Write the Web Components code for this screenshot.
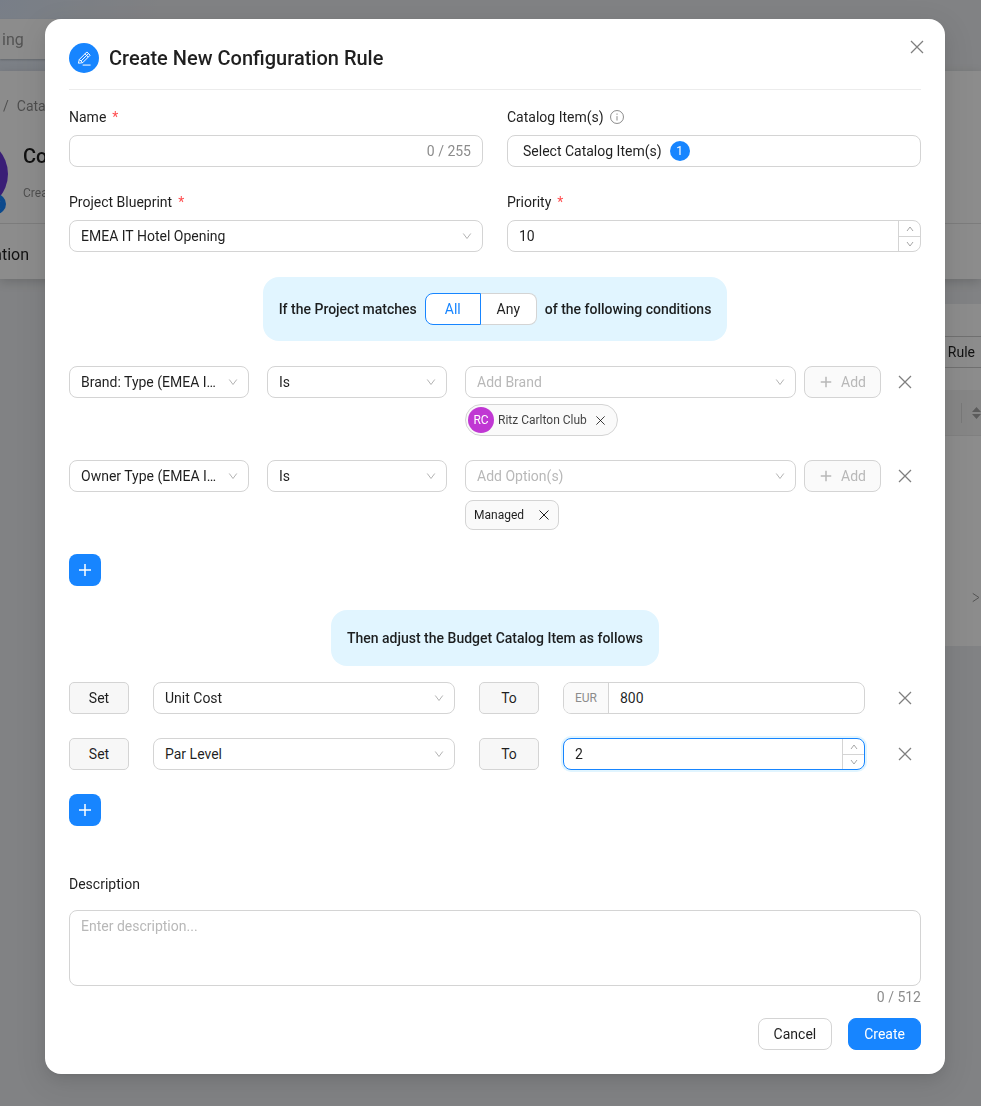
<!DOCTYPE html>
<html lang="en">
<head>
<meta charset="utf-8">
<meta name="viewport" content="width=device-width, initial-scale=1">
<title>Create New Configuration Rule</title>
<style>
	html {
		--primary: #1785ff;
		--primary-soft: #e1f5ff;
		--border: #d4d4d4;
		--text: rgba(0, 0, 0, .88);
		--muted: rgba(0, 0, 0, .45);
		--placeholder: #b8b8b8;
	}

	body {
		margin: 0;
		min-height: 100vh;
		background: #ebedf0;
		color: var(--text);
		font: 14px/22px Roboto, "Liberation Sans", sans-serif;
	}
</style>
</head>
<body>
	<page-backdrop></page-backdrop>

	<modal-dialog heading="Create New Configuration Rule">
		<form-grid>
			<text-field label="Name" required max="255"></text-field>
			<picker-field label="Catalog Item(s)" text="Select Catalog Item(s)" count="1"></picker-field>
			<select-field label="Project Blueprint" required value="EMEA IT Hotel Opening"></select-field>
			<number-field label="Priority" required value="10"></number-field>
		</form-grid>

		<banner-box class="conditions">
			<span>If the Project matches</span>
			<radio-switch name="match" options="All,Any"></radio-switch>
			<span>of the following conditions</span>
		</banner-box>

		<rule-list>
			<condition-row field="Brand: Type (EMEA I…" operator="Is" placeholder="Add Brand">
				<value-tag initials="RC">Ritz Carlton Club</value-tag>
			</condition-row>
			<condition-row field="Owner Type (EMEA I…" operator="Is" placeholder="Add Option(s)">
				<value-tag>Managed</value-tag>
			</condition-row>
			<add-button label="Add condition"></add-button>
		</rule-list>

		<banner-box class="adjustments">
			<span>Then adjust the Budget Catalog Item as follows</span>
		</banner-box>

		<rule-list>
			<adjust-row field="Unit Cost">
				<money-field label="Unit Cost value" currency="EUR" value="800"></money-field>
			</adjust-row>
			<adjust-row field="Par Level">
				<number-field title="Par Level value" active value="2"></number-field>
			</adjust-row>
			<add-button label="Add adjustment"></add-button>
		</rule-list>

		<area-field label="Description" placeholder="Enter description..." max="512"></area-field>
	</modal-dialog>

<script>
const icons = {
	close: '<path d="M2 2l12 12M14 2L2 14"/>',
	plus: '<path d="M8 2v12M2 8h12"/>',
	down: '<path d="M2 4l6 8 6-8"/>',
	up: '<path d="M2 12l6-8 6 8"/>',
	right: '<path d="M4 2l9 6-9 6"/>',
	info: '<circle cx="8" cy="8" r="7.400"/><path d="M8 7v5M8 4v1.500"/>',
	edit: '<path d="M1.500 13l1-4L10.500 1l3.500 3.500-8 8zM2.500 9l3.500 3.500M4.500 10.500l7.500-7.500M8.500 3l3.500 3.500M6 15h8.500"/>'
}

function icon(name, size, weight = 1) {
	return `<svg width="${size}" height="${size}" viewBox="0 0 16 16" fill="none"
		stroke="currentColor" stroke-width="${weight * 16 / size}" aria-hidden="true">${icons[name]}</svg>`
}

const baseStyle = `
	:host {
		display: block;
		min-width: 0;
	}

	* {
		box-sizing: border-box;
	}

	svg {
		display: block;
		flex: none;
	}

	button, input, select, textarea {
		margin: 0;
		font: inherit;
		color: inherit;
		outline: none;
	}

	button {
		display: inline-flex;
		align-items: center;
		justify-content: center;
		padding: 0;
		border: 0;
		background: none;
		cursor: pointer;
	}

	.label {
		display: flex;
		align-items: center;
		gap: 6px;
		margin-bottom: 7px;
	}

	.label svg {
		color: var(--muted);
	}

	.star {
		color: #ff4d4f;
	}

	.control {
		display: flex;
		width: 100%;
		height: 32px;
		border: 1px solid var(--border);
		border-radius: 8px;
		background: #fff;
		overflow: hidden;
	}

	.control input {
		flex: 1;
		min-width: 0;
		padding: 0 11px;
		border: 0;
		background: none;
	}

	.remove {
		width: 32px;
		height: 32px;
		color: #7f7f7f;
	}
`

const selectStyle = `
	.select {
		display: grid;
		align-items: center;
	}

	.select select {
		grid-area: 1 / 1;
		appearance: none;
		width: 100%;
		height: 32px;
		padding: 0 30px 0 11px;
		border: 1px solid var(--border);
		border-radius: 8px;
		background: #fff;
		text-overflow: ellipsis;
	}

	.select svg {
		grid-area: 1 / 1;
		justify-self: end;
		margin-right: 11px;
		color: #b3b3b3;
		pointer-events: none;
	}

	.select .empty {
		color: var(--placeholder);
	}
`

class BaseElement extends HTMLElement {
	constructor() {
		super()
		this.attachShadow({mode: 'open'})
	}

	connectedCallback() {
		this.shadowRoot.innerHTML = `<style>${baseStyle}${this.styles()}</style>${this.render()}`
	}

	attr(name) {
		return this.getAttribute(name) || ''
	}

	styles() {
		return ''
	}

	buildLabel(extra = '') {
		if (!this.hasAttribute('label')) {
			return ''
		}

		const star = this.hasAttribute('required') ? '<span class="star">*</span>' : ''

		return `<label class="label" for="control">${this.attr('label')}${star}${extra}</label>`
	}

	buildSelect(value, name, id, empty = false) {
		return `
			<div class="select">
				<select id="${id}" ${name ? `aria-label="${name}"` : ''} class="${empty ? 'empty' : ''}">
					<option>${value}</option>
				</select>
				${icon('down', 10)}
			</div>
		`
	}
}

class PageBackdrop extends BaseElement {
	styles() {
		return `
			:host {
				position: fixed;
				inset: 0;
				z-index: -1;
				overflow: hidden;
				background: radial-gradient(circle at 0 0, #dbe6f7, #ebedf0 160px);
			}

			.mask {
				position: absolute;
				inset: 0;
				background: rgba(0, 0, 0, .45);
			}

			.search {
				width: 50%;
				height: 40px;
				margin: 19px 0 12px;
				padding: 10px 2px;
				background: #fff;
				box-shadow: 0 1px 2px rgba(0, 0, 0, .2);
				color: #999;
				font-size: 16px;
			}

			.panel {
				background: #fff;
			}

			.top {
				height: 208px;
				box-shadow: 0 3px 10px rgba(0, 0, 0, .16);
			}

			.crumbs {
				display: flex;
				gap: 8px;
				padding: 24px 3px 0;
				color: var(--muted);
			}

			.head {
				display: flex;
				gap: 15px;
				height: 107px;
				padding-top: 21px;
				border-bottom: 1px solid #e2e2e2;
			}

			.avatar {
				position: relative;
				width: 72px;
				height: 72px;
				margin-left: -64px;
				border-radius: 50%;
				background: #6b38d8;
			}

			.badge {
				position: absolute;
				right: 2px;
				bottom: -4px;
				display: grid;
				place-items: center;
				width: 20px;
				height: 20px;
				border-radius: 50%;
				background: var(--primary);
				color: #fff;
			}

			.title {
				padding-top: 6px;
				font-size: 20px;
				font-weight: 500;
				line-height: 24px;
			}

			.title small {
				display: block;
				margin-top: 14px;
				color: var(--muted);
				font-size: 12px;
				font-weight: 400;
				line-height: 22px;
			}

			.tabs {
				display: flex;
				justify-content: flex-end;
				width: 29px;
				padding-top: 20px;
				font-size: 16px;
			}

			.list {
				width: 50%;
				height: 342px;
				margin: 25px 0 0 auto;
				padding-top: 32px;
			}

			.action {
				padding: 4px 6px;
				border: 1px solid #ccc;
				border-right: 0;
				text-align: right;
			}

			.row {
				display: flex;
				align-items: center;
				justify-content: flex-end;
				gap: 10px;
				height: 46px;
				margin-top: 22px;
				border-bottom: 1px solid #eaeaea;
				background: #f5f5f5;
				color: #a6a6a6;
			}

			.row i {
				width: 1px;
				height: 20px;
				background: #dcdcdc;
			}

			.more {
				display: flex;
				justify-content: flex-end;
				padding-top: 156px;
				color: #999;
			}
		`
	}

	render() {
		return `
			<div class="search">ing</div>
			<div class="panel top">
				<div class="crumbs"><span>/</span><span>Cata</span></div>
				<div class="head">
					<div class="avatar"><span class="badge">${icon('edit', 10)}</span></div>
					<div class="title">Co<small>Crea</small></div>
				</div>
				<div class="tabs">ation</div>
			</div>
			<div class="panel list">
				<div class="action">Rule</div>
				<div class="row">
					<i></i>
					<svg width="9" height="14" viewBox="0 0 9 14" fill="currentColor"><path d="M0 6l4.500-5L9 6zM0 8h9l-4.500 5z"/></svg>
				</div>
				<div class="more">${icon('right', 11)}</div>
			</div>
			<div class="mask"></div>
		`
	}
}

class ModalDialog extends BaseElement {
	styles() {
		return `
			:host {
				padding: 19px 36px 32px 45px;
			}

			section {
				padding: 24px;
				border-radius: 16px;
				background: #fff;
				box-shadow: 0 6px 16px rgba(0, 0, 0, .08), 0 3px 6px -4px rgba(0, 0, 0, .12), 0 9px 28px 8px rgba(0, 0, 0, .05);
			}

			header {
				display: flex;
				align-items: center;
				gap: 10px;
				padding-bottom: 16px;
				border-bottom: 1px solid #ececec;
				margin-bottom: 16px;
			}

			.symbol {
				display: grid;
				place-items: center;
				width: 30px;
				height: 30px;
				border-radius: 50%;
				background: var(--primary);
				color: #fff;
			}

			h1 {
				flex: 1;
				margin: 0;
				font-size: 20px;
				font-weight: 500;
				line-height: 30px;
			}

			.close {
				align-self: flex-start;
				width: 22px;
				height: 22px;
				margin: -7px -7px 0 0;
				color: #7f7f7f;
			}

			footer {
				display: flex;
				justify-content: flex-end;
				gap: 16px;
				margin-top: 10px;
			}

			footer button {
				height: 32px;
				padding: 0 15px;
				border: 1px solid var(--border);
				border-radius: 8px;
			}

			footer .primary {
				border-color: var(--primary);
				background: var(--primary);
				color: #fff;
			}
		`
	}

	render() {
		return `
			<section role="dialog" aria-labelledby="title">
				<header>
					<span class="symbol">${icon('edit', 15)}</span>
					<h1 id="title">${this.attr('heading')}</h1>
					<button class="close" aria-label="Close">${icon('close', 16, 1.25)}</button>
				</header>
				<slot></slot>
				<footer>
					<button>Cancel</button>
					<button class="primary">Create</button>
				</footer>
			</section>
		`
	}
}

class FormGrid extends BaseElement {
	styles() {
		return `
			:host {
				display: grid;
				grid-template-columns: 1fr 1fr;
				gap: 24px;
			}
		`
	}

	render() {
		return '<slot></slot>'
	}
}

class TextField extends BaseElement {
	styles() {
		return `
			.control {
				align-items: center;
			}

			.count {
				padding-right: 11px;
				color: #8c8c8c;
			}
		`
	}

	render() {
		return `
			${this.buildLabel()}
			<div class="control">
				<input id="control" type="text" maxlength="${this.attr('max')}">
				<span class="count">0 / ${this.attr('max')}</span>
			</div>
		`
	}
}

class PickerField extends BaseElement {
	styles() {
		return `
			.control {
				justify-content: flex-start;
				gap: 8px;
				padding: 0 15px;
			}

			.count {
				width: 20px;
				height: 20px;
				border-radius: 50%;
				background: var(--primary);
				color: #fff;
				font-size: 12px;
				line-height: 20px;
			}
		`
	}

	render() {
		return `
			${this.buildLabel(icon('info', 14))}
			<button id="control" class="control">
				${this.attr('text')}
				<span class="count">${this.attr('count')}</span>
			</button>
		`
	}
}

class SelectField extends BaseElement {
	styles() {
		return selectStyle
	}

	render() {
		return this.buildLabel() + this.buildSelect(this.attr('value'), '', 'control')
	}
}

class NumberField extends BaseElement {
	styles() {
		return `
			:host([active]) .control {
				border-color: var(--primary);
				box-shadow: 0 0 0 2px var(--primary-soft);
			}

			input {
				appearance: textfield;
			}

			input::-webkit-inner-spin-button {
				display: none;
			}

			.spin {
				display: grid;
				grid-template-rows: 1fr 1fr;
				width: 22px;
				border-left: 1px solid var(--border);
				color: #a6a6a6;
			}

			.spin button + button {
				border-top: 1px solid var(--border);
			}
		`
	}

	render() {
		const name = this.attr('title')

		return `
			${this.buildLabel()}
			<div class="control">
				<input id="control" type="number" value="${this.attr('value')}" ${name ? `aria-label="${name}"` : ''}>
				<div class="spin">
					<button aria-label="Increase">${icon('up', 8)}</button>
					<button aria-label="Decrease">${icon('down', 8)}</button>
				</div>
			</div>
		`
	}
}

class MoneyField extends BaseElement {
	styles() {
		return `
			.currency {
				padding: 0 11px;
				border-right: 1px solid var(--border);
				background: #fafafa;
				color: #8c8c8c;
				font-size: 12px;
				line-height: 30px;
			}
		`
	}

	render() {
		return `
			<div class="control">
				<span class="currency">${this.attr('currency')}</span>
				<input type="text" aria-label="${this.attr('label')}" value="${this.attr('value')}">
			</div>
		`
	}
}

class AreaField extends BaseElement {
	styles() {
		return `
			:host {
				margin-top: 47px;
			}

			.label {
				margin-bottom: 15px;
			}

			textarea {
				display: block;
				width: 100%;
				padding: 4px 11px;
				border: 1px solid var(--border);
				border-radius: 8px;
				resize: none;
			}

			textarea::placeholder {
				color: var(--placeholder);
			}

			.count {
				color: #8c8c8c;
				text-align: right;
			}
		`
	}

	render() {
		return `
			${this.buildLabel()}
			<textarea id="control" rows="3" placeholder="${this.attr('placeholder')}"></textarea>
			<div class="count">0 / ${this.attr('max')}</div>
		`
	}
}

class BannerBox extends BaseElement {
	styles() {
		return `
			:host {
				display: flex;
				align-items: center;
				gap: 8px;
				box-sizing: border-box;
				width: fit-content;
				min-height: 56px;
				margin: 25px auto;
				padding: 16px;
				border-radius: 16px;
				background: var(--primary-soft);
				font-weight: 500;
			}

			:host(.adjustments) {
				margin: 24px auto 16px;
			}
		`
	}

	render() {
		return '<slot></slot>'
	}
}

class RadioSwitch extends BaseElement {
	styles() {
		return `
			.group {
				display: grid;
				grid-template-columns: 56px 56px;
				font-weight: 400;
			}

			label {
				display: grid;
				place-items: center;
				height: 32px;
				border: 1px solid var(--border);
				border-left: 0;
				border-radius: 0 8px 8px 0;
				background: #fff;
				cursor: pointer;
			}

			label:first-child {
				border-left: 1px solid var(--border);
				border-radius: 8px 0 0 8px;
			}

			label:has(:checked) {
				border: 1px solid var(--primary);
				color: var(--primary);
			}

			input, span {
				grid-area: 1 / 1;
			}

			input {
				opacity: 0;
			}
		`
	}

	render() {
		const name = this.attr('name')
		const radios = this.attr('options').split(',').map((option, i) => `
			<label><input type="radio" name="${name}" ${i ? '' : 'checked'}><span>${option}</span></label>
		`)

		return `<div class="group" role="radiogroup" aria-label="${name}">${radios.join('')}</div>`
	}
}

class RuleList extends BaseElement {
	styles() {
		return `
			:host {
				display: grid;
				gap: 24px;
			}
		`
	}

	render() {
		return '<slot></slot>'
	}
}

class ConditionRow extends BaseElement {
	styles() {
		return `
			${selectStyle}

			:host {
				display: grid;
				grid-template-columns: 180px 180px 1fr;
				align-items: start;
				gap: 18px;
			}

			.line {
				display: grid;
				grid-template-columns: 1fr 77px 32px;
				gap: 8px;
			}

			.add {
				gap: 8px;
				border: 1px solid var(--border);
				border-radius: 8px;
				background: #fafafa;
				color: var(--placeholder);
			}
		`
	}

	render() {
		return `
			${this.buildSelect(this.attr('field'), 'Field', 'field')}
			${this.buildSelect(this.attr('operator'), 'Operator', 'operator')}
			<div>
				<div class="line">
					${this.buildSelect(this.attr('placeholder'), 'Value', 'value', true)}
					<button class="add" disabled>${icon('plus', 14, 1.5)}Add</button>
					<button class="remove" aria-label="Remove condition">${icon('close', 16, 1.25)}</button>
				</div>
				<slot></slot>
			</div>
		`
	}
}

class ValueTag extends BaseElement {
	styles() {
		return `
			:host {
				display: flex;
				align-items: center;
				gap: 14px;
				box-sizing: border-box;
				width: fit-content;
				height: 30px;
				margin-top: 8px;
				padding: 0 8px;
				border: 1px solid var(--border);
				border-radius: 8px;
				background: #fafafa;
				font-size: 12px;
			}

			:host([initials]) {
				gap: 4px;
				height: 32px;
				margin-top: 6px;
				padding: 0 11px 0 2px;
				border-radius: 16px;
				color: rgba(0, 0, 0, .75);
			}

			.avatar {
				width: 26px;
				height: 26px;
				border-radius: 50%;
				background: #c037d3;
				color: #fff;
				line-height: 26px;
				text-align: center;
			}

			:host([initials]) button {
				margin-left: 4px;
			}
		`
	}

	render() {
		const initials = this.attr('initials')

		return `
			${initials ? `<span class="avatar">${initials}</span>` : ''}
			<slot></slot>
			<button aria-label="Remove">${icon('close', initials ? 11 : 12)}</button>
		`
	}
}

class AdjustRow extends BaseElement {
	styles() {
		return `
			${selectStyle}

			:host {
				display: grid;
				grid-template-columns: 60px 1fr 60px 1fr 32px;
				gap: 24px;
			}

			.word {
				border: 1px solid var(--border);
				border-radius: 5px;
				background: #f7f7f7;
				line-height: 30px;
				text-align: center;
			}
		`
	}

	render() {
		return `
			<span class="word">Set</span>
			${this.buildSelect(this.attr('field'), 'Property', 'property')}
			<span class="word">To</span>
			<slot></slot>
			<button class="remove" aria-label="Remove adjustment">${icon('close', 16, 1.25)}</button>
		`
	}
}

class AddButton extends BaseElement {
	styles() {
		return `
			button {
				display: flex;
				width: 32px;
				height: 32px;
				border-radius: 8px;
				background: var(--primary);
				color: #fff;
			}
		`
	}

	render() {
		return `<button aria-label="${this.attr('label')}">${icon('plus', 16, 1.5)}</button>`
	}
}

customElements.define('page-backdrop', PageBackdrop)
customElements.define('modal-dialog', ModalDialog)
customElements.define('form-grid', FormGrid)
customElements.define('text-field', TextField)
customElements.define('picker-field', PickerField)
customElements.define('select-field', SelectField)
customElements.define('number-field', NumberField)
customElements.define('money-field', MoneyField)
customElements.define('area-field', AreaField)
customElements.define('banner-box', BannerBox)
customElements.define('radio-switch', RadioSwitch)
customElements.define('rule-list', RuleList)
customElements.define('condition-row', ConditionRow)
customElements.define('value-tag', ValueTag)
customElements.define('adjust-row', AdjustRow)
customElements.define('add-button', AddButton)
</script>
</body>
</html>
